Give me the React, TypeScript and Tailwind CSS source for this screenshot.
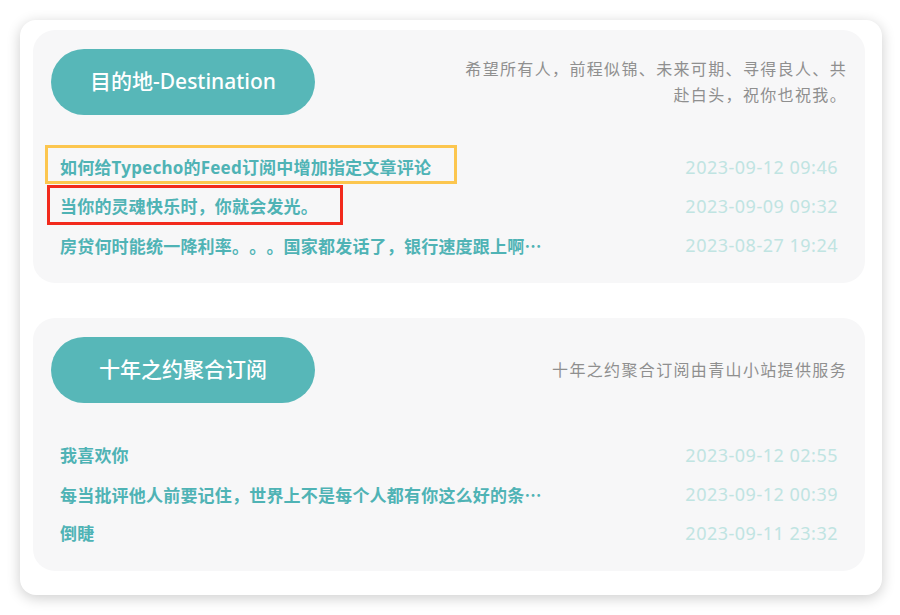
type Post = { title: string; date: string; mark?: 'yellow' | 'red' };

type Feed = { name: string; note: string; posts: Post[] };

// titles come pre-cut from the feed, ending with "…"
const feeds: Feed[] = [
  {
    name: '目的地-Destination',
    note: '希望所有人，前程似锦、未来可期、寻得良人、共赴白头，祝你也祝我。',
    posts: [
      { title: '如何给Typecho的Feed订阅中增加指定文章评论', date: '2023-09-12 09:46', mark: 'yellow' },
      { title: '当你的灵魂快乐时，你就会发光。', date: '2023-09-09 09:32', mark: 'red' },
      { title: '房贷何时能统一降利率。。。国家都发话了，银行速度跟上啊…', date: '2023-08-27 19:24' },
    ],
  },
  {
    name: '十年之约聚合订阅',
    note: '十年之约聚合订阅由青山小站提供服务',
    posts: [
      { title: '我喜欢你', date: '2023-09-12 02:55' },
      { title: '每当批评他人前要记住，世界上不是每个人都有你这么好的条…', date: '2023-09-12 00:39' },
      { title: '倒睫', date: '2023-09-11 23:32' },
    ],
  },
];

function Title({ text }: { text: string }) {
  // CJK ellipsis sits at mid-height, so draw it with the CJK face
  if (!text.endsWith('…')) return <>{text}</>;
  return (
    <>
      {text.slice(0, -1)}
      <span className="font-['Noto_Sans_CJK_SC',sans-serif]">…</span>
    </>
  );
}

function PostRow({ post }: { post: Post }) {
  return (
    <li className="flex items-center justify-between h-[39px]">
      <span className="relative flex">
        {post.mark === 'yellow' && (
          <span className="absolute left-[-15px] top-[-3px] w-[412px] h-[39px] border-[3px] border-[#fcc64f] pointer-events-none" />
        )}
        {post.mark === 'red' && (
          <span className="absolute left-[-13px] top-[-2px] w-[296px] h-[40px] border-[3px] border-[#f22a1c] pointer-events-none" />
        )}
        <a className="whitespace-nowrap text-[17px] font-bold tracking-[0.2px] text-[#4fb3b5] leading-[39px]">
          <Title text={post.title} />
        </a>
      </span>
      <span className="shrink-0 text-[18px] tracking-[0.5px] text-[#c0e4e2]">{post.date}</span>
    </li>
  );
}

function FeedCard({ feed }: { feed: Feed }) {
  return (
    <section className="bg-[#f7f7f8] rounded-[22px] pt-[19px] pb-[18px] pl-[18px] pr-[18px]">
      <header className="flex items-center justify-between">
        <div className="w-[264px] h-[66px] shrink-0 rounded-full bg-[#57b7b8] flex items-center justify-center text-white text-[21px] font-medium">
          {feed.name}
        </div>
        <p className="w-[390px] text-right text-[16px] tracking-[1.35px] leading-[26px] text-[#8f8f8f]">{feed.note}</p>
      </header>
      <ul className="mt-[33px] px-[9px]">
        {feed.posts.map((p) => (
          <PostRow key={p.date} post={p} />
        ))}
      </ul>
    </section>
  );
}

export default function App() {
  return (
    <div className="w-[900px] h-[615px] bg-white p-[20px] pr-[18px] font-['Noto_Sans','Noto_Sans_CJK_SC',sans-serif] [text-spacing-trim:space-all]">
      <div className="h-[575px] bg-white rounded-[16px] shadow-[0_3px_14px_rgba(0,0,0,0.2)] pt-[10px] pl-[13px] pr-[17px] pb-[24px] flex flex-col gap-[35px]">
        {feeds.map((f) => (
          <FeedCard key={f.name} feed={f} />
        ))}
      </div>
    </div>
  );
}
